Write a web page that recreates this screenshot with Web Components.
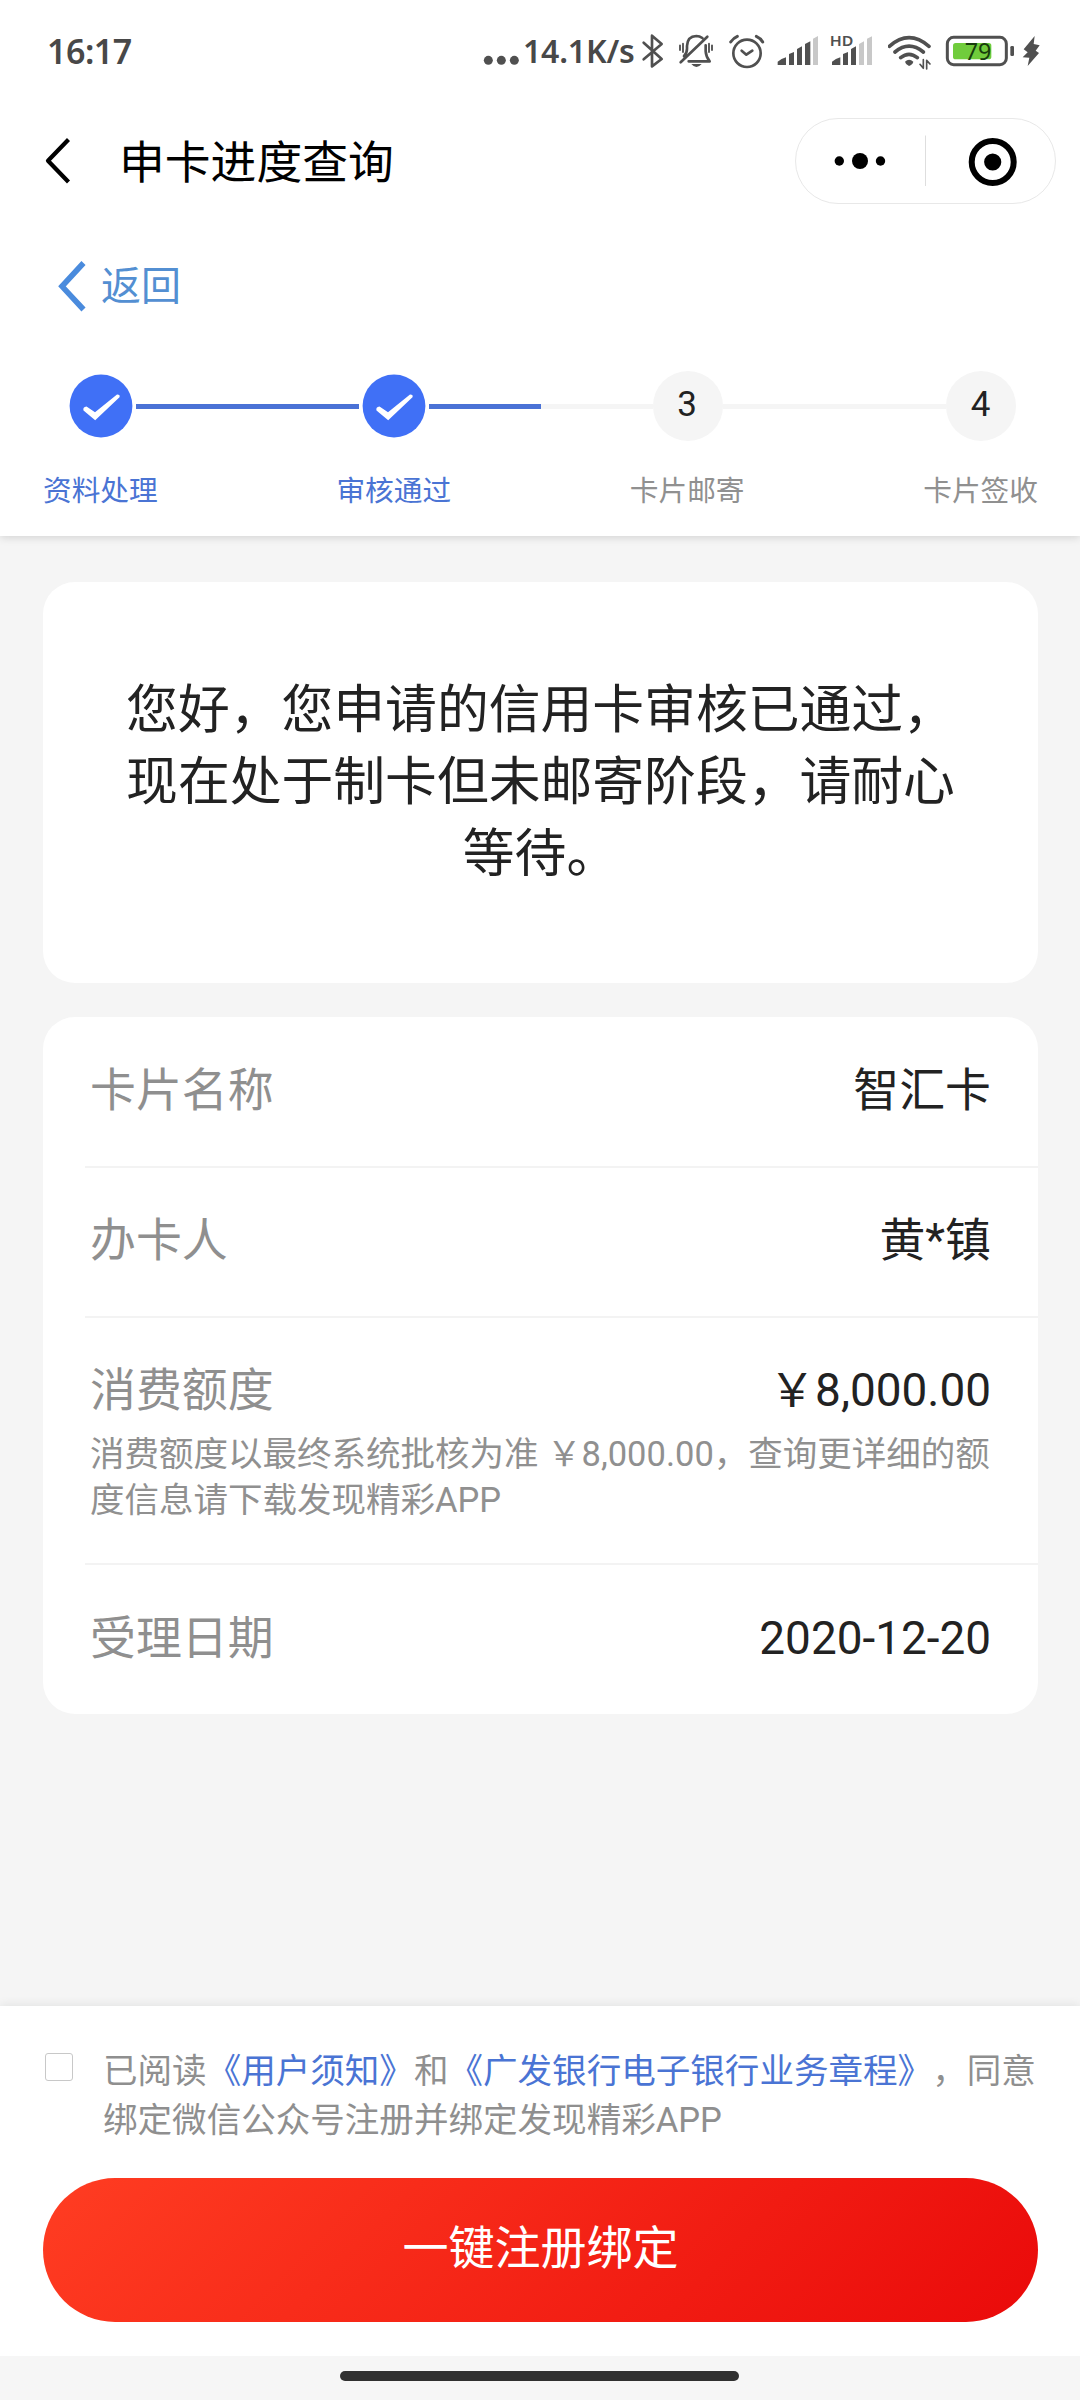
<!DOCTYPE html>
<html lang="zh-CN">
<head>
<meta charset="utf-8">
<title>申卡进度查询</title>
<style>
html,body{margin:0;padding:0}
body{width:1080px;height:2400px;overflow:hidden;background:#f5f5f5;color:#222;font-family:Roboto,"Noto Sans CJK SC",sans-serif;text-spacing-trim:space-all;-webkit-font-smoothing:antialiased}
</style>
</head>
<body>
<card-progress-page></card-progress-page>
<script>
const define = (name, html) => customElements.define(name, class extends HTMLElement {
  constructor() {
    super();
    const t = document.createElement('template');
    t.innerHTML = html;
    this.attachShadow({mode: 'open'}).append(t.content.cloneNode(true));
  }
});

define('status-bar', `
<style>
:host{display:flex;height:100px;padding:0 39px 0 47px;box-sizing:border-box;color:#484848;font-family:"Noto Sans",sans-serif;font-weight:600}
.time{font-size:34px;line-height:40px;padding-top:31px;letter-spacing:-.5px;flex:1;white-space:nowrap}
.icons{display:flex;padding-top:30px;height:40px}
.rate{width:118px;font-size:32px;line-height:42px;white-space:nowrap;letter-spacing:-.2px}
.rate span{display:block;padding-left:1px}
svg{display:block;height:40px;flex:none;fill:#505050}
.s{fill:none;stroke:#505050;stroke-linecap:round;stroke-linejoin:round}
</style>
<div class="time">16:17</div>
<div class="icons">
<svg style="width:39px" viewBox="69 60 117 120"><circle cx="85" cy="151" r="13.5"/><circle cx="124" cy="151" r="13.5"/><circle cx="163" cy="151" r="13.5"/></svg>
<div class="rate"><span>14.1K/s</span></div>
<svg style="width:25px" viewBox="540 60 75 120"><path class="s" stroke-width="8" d="M551 98 L605 147 L576 169 V77 L605 102 L551 148"/></svg>
<svg style="width:42px;margin-left:10px" viewBox="645 60 126 120"><path class="s" stroke-width="8" d="M662 157 L742 80 M672 138 Q681 130 681 116 V108 Q682 79 709 78 Q719 78 727 84 M737 106 V124 Q738 140 749 154 H686"/><path d="M694 162 H725 Q709 180 694 162Z"/><path class="s" stroke-width="5.5" d="M660 106V120 M669 101V126 M747 101V126 M756 106V120"/></svg>
<svg style="width:40px;margin-left:9px" viewBox="798 60 120 120"><g class="s"><circle cx="861" cy="130" r="41" stroke-width="8"/><path stroke-width="8" d="M845 122 L859 134 L877 122"/><path stroke-width="9" d="M812 96 Q820 84 832 79 M889 79 Q901 84 908 96"/></g></svg>
<svg style="width:43px;margin-left:11px" viewBox="51 60 129 120"><path d="M53 165V155Q64 146 78 142V165ZM87 165V132L102 126V165ZM111 165V117L126 109V165ZM135 165V102L151 94V165Z"/><path fill="#c8c8c8" d="M159 165V86L174 78V165Z"/></svg>
<svg style="width:44px;margin-left:10px" viewBox="210 60 132 120"><text x="209" y="107" font-size="44" font-weight="600" textLength="71" lengthAdjust="spacingAndGlyphs">HD</text><path d="M216 165V155Q227 146 241 142V165ZM249 165V132L264 126V165ZM273 165V117L288 109V165Z"/><path fill="#c8c8c8" d="M297 165V102L312 94V165ZM321 165V86L336 79V165Z"/></svg>
<svg style="width:44px;margin-left:14px" viewBox="384 60 132 120"><path class="s" stroke-width="11" stroke-linecap="butt" d="M388 109 Q447 57 507 109 M405 126 Q447 91 490 126 M422 143 Q447 123 472 143"/><path d="M435 155Q447 144 460 155Q458 164 447 168Q437 164 435 155Z"/><path class="s" stroke-width="5" stroke-linecap="butt" stroke-linejoin="miter" d="M490 149V175L480 163 M500 177V151L510 162"/></svg>
<svg style="width:70px;margin-left:13px" viewBox="555 60 210 120"><rect x="562" y="82" width="177" height="82" rx="19" fill="none" stroke="#505050" stroke-width="9"/><rect x="579" y="99" width="115" height="49" rx="8" fill="#70cc3c"/><rect x="751" y="108" width="11" height="30" rx="4"/><text x="614" y="149" font-size="71" font-weight="400" fill="#173d0c" textLength="80" lengthAdjust="spacingAndGlyphs">79</text></svg>
<svg style="width:21px;margin-left:5px" viewBox="780 60 63 120"><path d="M824 78L821 102L839 106L827 122L837 129L803 168L808 143L788 142L803 127L791 118Z"/></svg>
</div>`);

define('wx-capsule', `
<style>
:host{display:block;width:261px;height:86px;box-sizing:border-box;border:1.5px solid #e8e8e8;border-radius:43px}
svg{display:block;margin:-1px}
</style>
<svg width="261" height="86" viewBox="795 118 261 86"><circle cx="839.3" cy="161" r="4.7"/><circle cx="860" cy="161" r="8"/><circle cx="880.5" cy="161" r="4.7"/><path d="M925.5 135.5V186" stroke="#dedede"/><circle cx="992.7" cy="162" r="21" fill="none" stroke="#000" stroke-width="6"/><circle cx="992.7" cy="162" r="8.6"/></svg>`);

define('nav-bar', `
<style>
:host{display:flex;height:122px;padding:0 24px 0 40px;box-sizing:border-box;color:#000;align-items:center}
svg{display:block;width:36px;height:50px;margin-top:-1px}
.title{font-size:45.8px;line-height:60px;padding:5px 0 0 43px;flex:1}
</style>
<svg viewBox="40 136 36 50"><path d="M68.5 139.5L48 160.8L68.5 182" fill="none" stroke="#000" stroke-width="4.2" stroke-linejoin="round"/></svg>
<div class="title"><slot></slot></div><wx-capsule></wx-capsule>`);

define('back-link', `
<style>
:host{display:flex;align-items:center;height:60px;padding:34px 0 0 56px;color:#538fd2;font-size:40px;line-height:60px}
svg{display:block;width:32px;height:56px;margin-right:13px}
span{padding-top:2px}
</style>
<svg viewBox="56 258 32 56"><path d="M83.5 263L62 286.3L83.5 309.5" fill="none" stroke="#4a8bdd" stroke-width="5.6"/></svg><span><slot></slot></span>`);

define('step-dot', `
<style>
:host{display:flex;width:70px;height:70px;flex:none;align-items:center;justify-content:center;font-size:35px;line-height:70px;color:#222}
:host(:not([done])){background:#f5f5f5;border-radius:50%}
svg{display:none;width:70px;height:70px}
:host([done]) svg{display:block}
span{margin:-2px 1px 0 0}
:host([done]) span{display:none}
</style>
<svg viewBox="66 371 70 70"><circle cx="101" cy="406" r="31.4" fill="#4070f6"/><path fill="#fff" d="M83.5 410.5Q82.5 407 86.5 406.5L95 412.2L117 394.6Q120.5 394.5 119.5 397.2L95.2 420.3Z"/></svg><span><slot></slot></span>`);

define('progress-steps', `
<style>
:host{display:block;padding-top:55px}
.row{display:flex;align-items:center;padding:0 64px 0 66px}
i{flex:1;height:5px;margin-top:1px;background:#f5f5f5}
.on{background:#4a72d6}.half{background:linear-gradient(90deg,#4a72d6 50%,#f5f5f5 50%)}
.labels{display:flex;justify-content:space-between;padding:28px 42px 0 43px;font-size:28.7px;line-height:44px;color:#909090}
.b{color:#4a74d4}
</style>
<div class="row"><step-dot done></step-dot><i class="on"></i><step-dot done></step-dot><i class="half"></i><step-dot>3</step-dot><i></i><step-dot>4</step-dot></div>
<div class="labels"><span class="b">资料处理</span><span class="b">审核通过</span><span>卡片邮寄</span><span>卡片签收</span></div>`);

define('message-card', `
<style>
:host{display:block;box-sizing:border-box;height:401px;margin:46px 42px 0 43px;padding:93px 80px 0;background:#fff;border-radius:32px;font-size:51.8px;line-height:72px;text-align:center;color:#222}
</style><slot></slot>`);

define('info-row', `
<style>
:host{display:block;box-sizing:border-box;height:150px;margin-left:42px;padding:43px 47px 0 5px;border-bottom:2px solid #f3f3f3}
:host([first]){height:151px;padding-top:44px}
:host([tall]){height:247px}
:host([last]){border:0;height:148px;padding-top:44px}
.line{display:flex;justify-content:space-between;font-size:45.9px;line-height:58px;color:#222;white-space:nowrap}
.k{color:#8f8f8f}
.note{font-size:34.5px;line-height:46px;color:#909090;padding-top:12px;white-space:nowrap}
</style>
<div class="line"><span class="k"><slot name="label"></slot></span><span><slot></slot></span></div><div class="note"><slot name="note"></slot></div>`);

define('info-card', `
<style>:host{display:block;margin:34px 42px 0 43px;height:697px;background:#fff;border-radius:32px;overflow:hidden}</style><slot></slot>`);

define('agree-line', `
<style>
:host{display:flex;padding:41px 0 0 45px;font-size:34.55px;line-height:48.5px;color:#8f8f8f;white-space:nowrap}
.box{width:28px;height:28px;box-sizing:border-box;border:1.5px solid #c8c8c8;border-radius:3px;margin:6px 30px 0 0;flex:none}
</style><span class="box"></span><div><slot></slot></div>`);

define('primary-button', `
<style>
:host{display:flex;align-items:center;justify-content:center;height:144px;margin:34px 42px 0 43px;border-radius:72px;background:linear-gradient(135deg,#ff3d22,#ea0a0a);color:#fff;font-size:46px;line-height:60px}
span{margin-top:-4px}
</style><span><slot></slot></span>`);

define('card-progress-page', `
<style>
:host{display:flex;flex-direction:column;width:1080px;height:2400px;background:#f5f5f5}
header{height:536px;background:#fff;box-shadow:0 2px 8px rgba(0,0,0,.13);flex:none}
main{flex:1}
footer{height:350px;background:#fff;box-shadow:0 -2px 9px rgba(0,0,0,.07);flex:none}
.home{height:44px;display:flex;justify-content:center;align-items:flex-start;background:#f6f6f6;flex:none}
.home i{width:399px;height:10px;border-radius:5px;background:#303030;margin:15px 1px 0 0}
a{color:#4a74d4}
</style>
<header><status-bar></status-bar><nav-bar>申卡进度查询</nav-bar><back-link>返回</back-link><progress-steps></progress-steps></header>
<main>
<message-card>您好，您申请的信用卡审核已通过，现在处于制卡但未邮寄阶段，请耐心等待。</message-card>
<info-card>
<info-row first><span slot="label">卡片名称</span>智汇卡</info-row>
<info-row><span slot="label">办卡人</span>黄*镇</info-row>
<info-row tall><span slot="label">消费额度</span>￥8,000.00<span slot="note">消费额度以最终系统批核为准 ￥8,000.00，查询更详细的额<br>度信息请下载发现精彩APP</span></info-row>
<info-row last><span slot="label">受理日期</span>2020-12-20</info-row>
</info-card>
</main>
<footer><agree-line>已阅读<a>《用户须知》</a>和<a>《广发银行电子银行业务章程》</a>，同意<br>绑定微信公众号注册并绑定发现精彩APP</agree-line><primary-button>一键注册绑定</primary-button></footer>
<div class="home"><i></i></div>`);
</script>
</body>
</html>
